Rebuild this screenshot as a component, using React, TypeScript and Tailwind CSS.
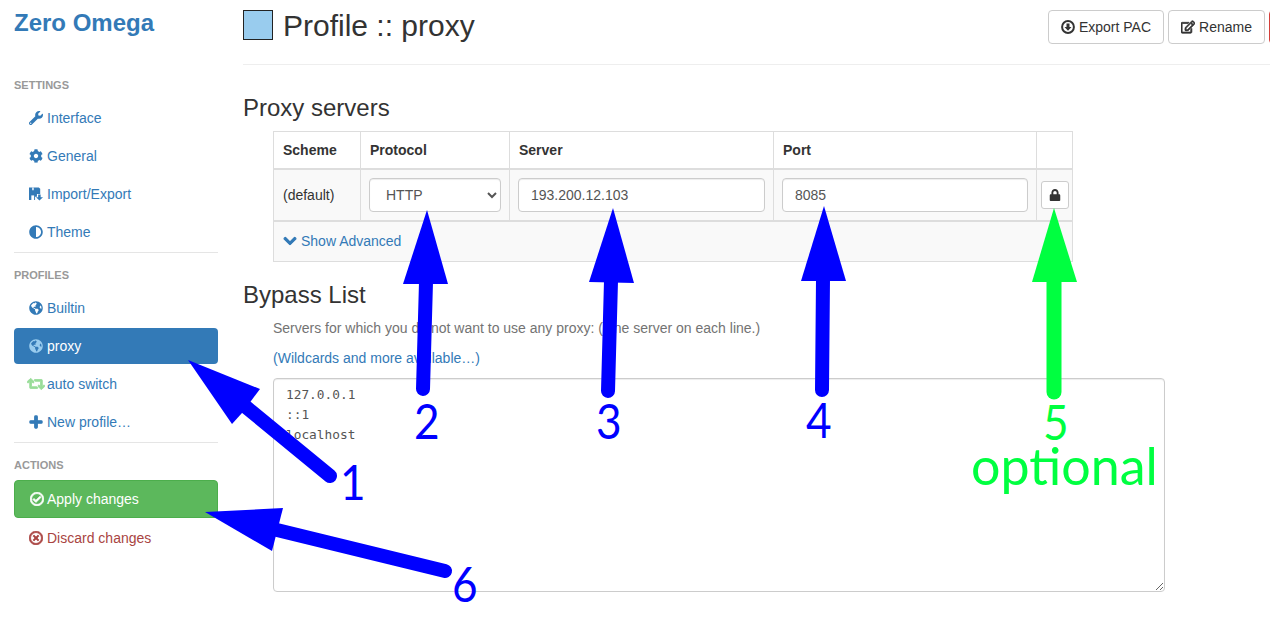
import type { ReactNode } from "react";
import {
  FaWrench, FaCog, FaAdjust, FaGlobeAmericas, FaRetweet, FaPlus, FaRegCheckCircle,
  FaRegTimesCircle, FaRegEdit, FaChevronDown, FaLock,
} from "react-icons/fa";

function FloppySave() {
  return (
    <svg width="15" height="14" viewBox="0 0 15 14" fill="currentColor">
      <path d="M0 0h10.500L12 1.500V7H8.500v3H6.500v3.500H0z" />
      <path d="M3.500 0H5v3H3.500z" fill="#fff" />
      <path d="M2.500 8.500h3v5h-3z" fill="#fff" />
      <path d="M9.800 7.500h2.700V10.500H15l-3.800 3.500L7.500 10.500h2.300z" />
    </svg>
  );
}

function CircleDownload() {
  return (
    <svg width="14" height="14" viewBox="0 0 14 14" fill="none">
      <circle cx="7" cy="7" r="5.900" stroke="currentColor" strokeWidth="2" />
      <path d="M5.500 3.500h3V7h2L7 10.800 3.500 7h2z" fill="currentColor" />
    </svg>
  );
}

function Header({ children, top }: { children: ReactNode; top: string }) {
  return (
    <div className={`${top} mb-[7px] h-4 text-[11px] leading-4 font-bold uppercase text-[#999]`}>{children}</div>
  );
}

function NavItem({ icon, label, cls = "text-[#337ab7]" }: { icon: ReactNode; label: string; cls?: string }) {
  return (
    <a className={`mb-[2px] flex h-9 items-center rounded pl-[15px] ${cls}`}>
      <span className="mr-1 flex w-[14px] shrink-0 justify-center">{icon}</span>
      {label}
    </a>
  );
}

function Divider() {
  return <div className="h-px bg-[#e5e5e5]" />;
}

function Sidebar() {
  return (
    <aside className="w-[243px] shrink-0 pr-[25px] pl-[14px]">
      <div className="h-[46px] text-[24px] leading-[46px] font-bold text-[#337ab7]">Zero Omega</div>
      <Header top="mt-[31px]">Settings</Header>
      <NavItem icon={<FaWrench size={14} />} label="Interface" />
      <NavItem icon={<FaCog size={14} />} label="General" />
      <NavItem icon={<FloppySave />} label="Import/Export" />
      <NavItem icon={<FaAdjust size={14} />} label="Theme" />
      <Divider />
      <Header top="mt-[14px]">Profiles</Header>
      <NavItem icon={<FaGlobeAmericas size={14} />} label="Builtin" />
      <NavItem icon={<FaGlobeAmericas size={14} className="text-[#99ccee]" />} label="proxy" cls="bg-[#337ab7] text-white" />
      <NavItem icon={<FaRetweet size={18} stroke="currentColor" strokeWidth={30} className="shrink-0 text-[#99dd99]" />} label="auto switch" />
      <NavItem icon={<FaPlus size={14} stroke="currentColor" strokeWidth={40} />} label="New profile…" />
      <Divider />
      <Header top="mt-[14px]">Actions</Header>
      <a className="mb-[2px] flex h-[38px] items-center rounded border border-[#4cae4c] bg-[#5cb85c] pl-[15px] text-white">
        <span className="mr-[3px] flex w-[14px] shrink-0 justify-center">
          <FaRegCheckCircle size={14} stroke="currentColor" strokeWidth={30} />
        </span>
        Apply changes
      </a>
      <NavItem icon={<FaRegTimesCircle size={14} stroke="currentColor" strokeWidth={30} />} label="Discard changes" cls="text-[#a94442]" />
    </aside>
  );
}

const inputCls =
  "h-[34px] w-full rounded border border-[#ccc] bg-white px-3 text-[14px] text-[#555] shadow-[inset_0_1px_1px_rgba(0,0,0,0.075)]";

function ProxyTable() {
  return (
    <table className="ml-[30px] w-[799px] table-fixed border-collapse">
      <colgroup>
        <col className="w-[87px]" />
        <col className="w-[149px]" />
        <col className="w-[264px]" />
        <col className="w-[263px]" />
        <col className="w-[36px]" />
      </colgroup>
      <thead>
        <tr className="h-[37px]">
          <th className="border border-b-2 border-[#ddd] px-[9px] text-left font-bold">Scheme</th>
          <th className="border border-b-2 border-[#ddd] px-[9px] text-left font-bold">Protocol</th>
          <th className="border border-b-2 border-[#ddd] px-[9px] text-left font-bold">Server</th>
          <th className="border border-b-2 border-[#ddd] px-[9px] text-left font-bold">Port</th>
          <th className="border border-b-2 border-[#ddd]" />
        </tr>
      </thead>
      <tbody>
        <tr className="h-[52px] bg-[#f9f9f9]">
          <td className="border border-b-2 border-[#ddd] px-[9px]">(default)</td>
          <td className="border border-b-2 border-[#ddd] px-[8px]">
            <select className={inputCls} defaultValue="HTTP">
              <option>HTTP</option>
            </select>
          </td>
          <td className="border border-b-2 border-[#ddd] px-[8px]">
            <input className={inputCls} readOnly value="193.200.12.103" />
          </td>
          <td className="border border-b-2 border-[#ddd] px-[8px]">
            <input className={inputCls} readOnly value="8085" />
          </td>
          <td className="border border-b-2 border-[#ddd] px-1">
            <button className="flex h-7 w-7 items-center justify-center rounded-[3px] border border-[#ccc] bg-white text-[#333]">
              <FaLock size={12} />
            </button>
          </td>
        </tr>
        <tr className="h-[41px] bg-[#f9f9f9]">
          <td colSpan={5} className="border border-[#ddd] px-[9px]">
            <a className="flex items-center text-[#337ab7]">
              <FaChevronDown size={14} stroke="currentColor" strokeWidth={40} className="mr-1" />
              Show Advanced
            </a>
          </td>
        </tr>
      </tbody>
    </table>
  );
}

function TopBar() {
  return (
    <header className="flex h-[65px] border-b border-[#eee] pt-[10px]">
      <div className="flex h-[30px] w-[805px] shrink-0 items-center">
        <span className="mr-[10px] h-[30px] w-[30px] shrink-0 border border-[#222] bg-[#99ccee]" />
        <h2 className="pt-px text-[30px] leading-[33px] text-[#333]">Profile :: proxy</h2>
      </div>
      <div className="flex h-[34px] gap-1">
        <button className="flex w-[116px] shrink-0 items-center justify-center rounded border border-[#ccc] bg-white">
          <span className="mr-1">
            <CircleDownload />
          </span>
          Export PAC
        </button>
        <button className="flex w-[97px] shrink-0 items-center justify-center rounded border border-[#ccc] bg-white">
          <FaRegEdit size={14} stroke="currentColor" strokeWidth={30} className="mr-1" />
          Rename
        </button>
        <button className="w-[80px] shrink-0 rounded border border-[#d43f3a] bg-white text-[#a94442]">Delete</button>
      </div>
    </header>
  );
}

function Arrows() {
  return (
    <svg className="pointer-events-none absolute inset-0" width="1270" height="636" viewBox="0 0 1270 636">
      <g fill="#0000ff" stroke="#0000ff" strokeLinecap="round">
        <polygon strokeWidth="0" points="188,360 260,389 251,401 242,413 232,424" />
        <line x1="246" y1="407" x2="330" y2="476" strokeWidth="14" />
        <polygon strokeWidth="0" points="205,512 283,508 272,551" />
        <line x1="277" y1="530" x2="445" y2="571" strokeWidth="14" />
        <polygon strokeWidth="0" points="427,210 403,284 448,284" />
        <line x1="426" y1="282" x2="423" y2="389" strokeWidth="14" />
        <polygon strokeWidth="0" points="613,208 589,282 634,283" />
        <line x1="611" y1="281" x2="608" y2="391" strokeWidth="14" />
        <polygon strokeWidth="0" points="824,206 801,281 846,281" />
        <line x1="823" y1="279" x2="822" y2="390" strokeWidth="14" />
      </g>
      <g fill="#00ff40" stroke="#00ff40" strokeLinecap="round">
        <polygon strokeWidth="0" points="1054,208 1032,282 1077,282" />
        <line x1="1054" y1="280" x2="1054" y2="392" strokeWidth="15" />
      </g>
    </svg>
  );
}

const labelCls =
  "pointer-events-none absolute origin-left scale-x-[0.92] font-['Lato',sans-serif] text-[48px] leading-[48px]";

export default function App() {
  return (
    <div className="relative flex h-[636px] w-[1270px] overflow-hidden bg-white font-['Liberation_Sans',Arial,sans-serif] text-[14px] leading-5 text-[#333]">
      <Sidebar />
      <main className="min-w-0 flex-1">
        <TopBar />
        <h3 className="mt-[30px] mb-[10px] text-[24px] leading-[26px]">Proxy servers</h3>
        <ProxyTable />
        <h3 className="mt-[20px] text-[24px] leading-[26px]">Bypass List</h3>
        <div className="ml-[30px]">
          <p className="mt-[10px] text-[#737373]">Servers for which you do not want to use any proxy: (One server on each line.)</p>
          <a className="mt-[10px] block text-[#337ab7]">(Wildcards and more available…)</a>
          <textarea
            readOnly
            className="mt-[10px] h-[214px] w-[892px] rounded border border-[#ccc] bg-white px-3 py-[6px] font-['DejaVu_Sans_Mono',monospace] text-[12.8px] leading-5 text-[#555] shadow-[inset_0_1px_1px_rgba(0,0,0,0.075)]"
            value={"127.0.0.1\n::1\nlocalhost"}
          />
        </div>
      </main>
      <Arrows />
      <span className={`${labelCls} top-[458px] left-[340px] text-[#0000ff]`}>1</span>
      <span className={`${labelCls} top-[397px] left-[414px] text-[#0000ff]`}>2</span>
      <span className={`${labelCls} top-[397px] left-[596px] text-[#0000ff]`}>3</span>
      <span className={`${labelCls} top-[396px] left-[806px] text-[#0000ff]`}>4</span>
      <span className={`${labelCls} top-[398px] left-[1043px] text-[#00ff40]`}>5</span>
      <span className={`${labelCls} top-[560px] left-[452px] text-[#0000ff]`}>6</span>
      <span className="pointer-events-none absolute top-[438px] left-[971px] origin-left scale-x-[0.98] font-['Lato',sans-serif] text-[53px] leading-[53px] text-[#00ff40]">optional</span>
    </div>
  );
}
